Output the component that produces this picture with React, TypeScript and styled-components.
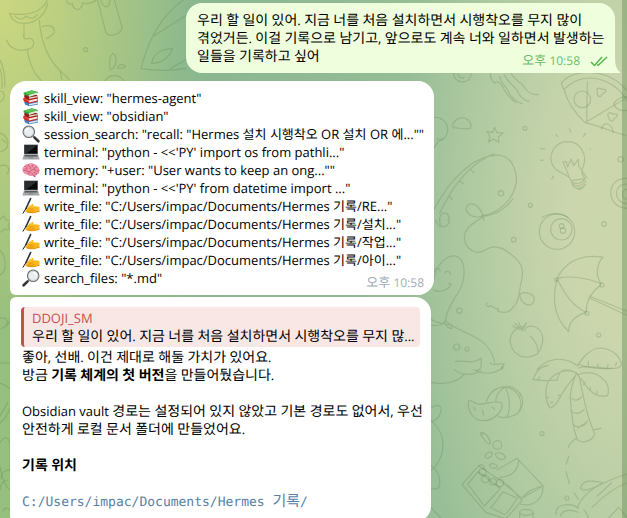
import React from 'react';
import styled, { createGlobalStyle } from 'styled-components';

const GlobalStyle = createGlobalStyle`
  * { box-sizing: border-box; }
  html, body, #root { height: 100%; }
  body {
    margin: 0;
    overflow: hidden;
    font-family: 'Open Sans', 'Noto Sans CJK KR', sans-serif;
    font-size: 13px;
    line-height: 18px;
    color: #000;
    word-break: keep-all;
    text-rendering: geometricPrecision;
  }
`;

const Page = styled.main`
  position: relative;
  display: flex;
  height: 100vh;
  overflow: hidden;
  background:
    radial-gradient(ellipse 190px 330px at 0 0, #ccd780, rgba(204, 215, 128, 0)),
    radial-gradient(ellipse 230px 480px at 100% 42%, #cbd6ad 25%, rgba(203, 214, 173, 0)),
    linear-gradient(90deg, #97bf7e, #8ab791 35%, #95bd96 65%, #a9c79d);
`;

const Wallpaper = styled.svg`
  position: absolute;
  top: 0;
  left: 0;
  width: 627px;
  height: 518px;
  fill: none;
  stroke: #5c7f4c;
  stroke-opacity: 0.27;
  stroke-linecap: round;
  stroke-linejoin: round;
`;

const Chat = styled.section`
  position: relative;
  flex: 1;
  min-width: 0;
  display: flex;
  flex-direction: column;
  padding: 3px 7px 0 10px;
  overflow: hidden;
`;

const ScrollGutter = styled.div`
  position: relative;
  flex: none;
  width: 5px;
  background: rgba(62, 112, 54, 0.3);
`;

const Bubble = styled.article<{ $width: number; $radius: string; $own?: boolean; $gap: number }>`
  position: relative;
  flex: none;
  width: 100%;
  max-width: ${(p) => p.$width}px;
  align-self: ${(p) => (p.$own ? 'flex-end' : 'flex-start')};
  margin-bottom: ${(p) => p.$gap}px;
  border-radius: ${(p) => p.$radius};
  background: ${(p) => (p.$own ? '#efffde' : '#fff')};
`;

const Paragraph = styled.p`
  margin: 0;
  min-height: 18px;
`;

const OwnBody = styled.div`
  padding: 8px 7px 8px 11px;
`;

const Tail = styled.svg`
  position: absolute;
  right: -6px;
  bottom: 0;
  width: 16px;
  height: 16px;
`;

const Hangul = styled.span`
  font-size: 14px;
  line-height: 1;
`;

const Meta = styled.span<{ $own?: boolean }>`
  display: flex;
  align-items: center;
  gap: 10px;
  float: right;
  margin: 5px 0 -5px auto;
  font-size: 12px;
  color: ${(p) => (p.$own ? '#6dbb65' : '#a0acb6')};

  ${Hangul} {
    font-size: 13px;
  }
`;

const Checks = styled.svg`
  width: 18px;
  height: 12px;
  fill: none;
  stroke: #56b84c;
  stroke-width: 1.5;
`;

const ToolList = styled.ul`
  margin: 0;
  padding: 8px 10px 8px 12px;
  list-style: none;

  ${Hangul} {
    font-size: 13px;
  }
`;

const ToolRow = styled.li`
  display: flex;
  gap: 4px;
  height: 18px;
  white-space: nowrap;
`;

const Emoji = styled.svg`
  flex: none;
  width: 18px;
  height: 18px;
`;

const ReplyBody = styled.div`
  padding: 10px 11px;
`;

const Quote = styled.blockquote`
  margin: 0 0 1px;
  padding: 2px 2px 2px 8px;
  border-left: 3px solid #c8504b;
  border-radius: 4px;
  background: #f9e7e6;
`;

const QuoteName = styled.div`
  font-weight: 500;
  color: #c5514c;
`;

const QuoteText = styled.div`
  overflow: hidden;
  text-overflow: ellipsis;
  white-space: nowrap;
`;

const TextBlock = styled.div`
  margin: 0 -8px 0 1px;
`;

const Path = styled.code`
  font-family: 'DejaVu Sans Mono', 'Noto Sans CJK KR', monospace;
  font-size: 13px;
  color: #5a7fa6;

  ${Hangul} {
    font-size: 15px;
  }
`;

function T({ children }: { children: string }) {
  return (
    <>
      {children.split(/([\uac00-\ud7a3]+)/).map((part, i) =>
        i % 2 ? <Hangul key={i}>{part}</Hangul> : part,
      )}
    </>
  );
}

type IconName = 'books' | 'left' | 'laptop' | 'brain' | 'write' | 'right';

function Lens() {
  return (
    <>
      <path d="M11 11l2 2" stroke="#8b8b8b" strokeWidth="2" />
      <path d="M12.6 12.6l3.8 3.7" stroke="#343434" strokeWidth="2.6" strokeLinecap="round" />
      <circle cx="6.8" cy="6.8" r="5.7" fill="#e9eff0" stroke="#6b6e70" strokeWidth="1.2" />
      <circle cx="6.8" cy="6.8" r="4.7" fill="none" stroke="#c5cccd" strokeWidth=".8" />
      <path d="M3.5 6.5c.2-1.8 1.3-3 3-3.2" fill="none" stroke="#fff" strokeWidth="1.2" />
    </>
  );
}

const drawings: Record<IconName, React.ReactNode> = {
  books: (
    <>
      <path d="M2 12.5l9-2 5 2v3L7 17.2l-4-1.6z" fill="#3d7fc4" />
      <path d="M7 15l8.8-1.7v1.5L7 16.5z" fill="#e8e8e2" />
      <path d="M1.5 9l9-2.2 5.5 2v3.4L7 14.5 2.5 12.6C1 11.8 1 10 1.500 9z" fill="#d3261f" />
      <path d="M6.800 11.400l8.700-1.900v1.900l-8.600 2z" fill="#f3ebe4" />
      <path d="M2.500 10l4.600 1.800" stroke="#f36a55" strokeWidth=".8" />
      <path d="M2.500 6l8.500-1.500 4.500 2v2.700L7.300 10.800 3 8.900c-1-.8-1-2-.5-2.900z" fill="#8b221c" />
      <path d="M7 8.500l8.300-1.600v1.400l-8 1.600z" fill="#e9dcc8" />
      <path d="M1.500 3.800L9.700 1.200l6.300 1.900v1L6.700 7.200 1.800 5.600z" fill="#2c9e3f" />
      <path d="M1.800 3.800l7.900-2.300 5.500 1.600-8.600 2.500z" fill="#5cc552" />
      <path d="M6.800 6l8.700-2.700v2L7 7.900z" fill="#dde8d5" />
    </>
  ),
  left: <Lens />,
  right: (
    <g transform="matrix(-1 0 0 1 18 0)">
      <Lens />
    </g>
  ),
  laptop: (
    <>
      <path d="M2 1.500h14v10H2z" fill="#777b7e" />
      <path d="M2.700 2.200h12.600v8.500H2.700z" fill="#08090a" />
      <path d="M2.700 2.200h12.600L4 10.700H2.700z" fill="#292d30" />
      <path d="M2 11.500h14l1.500 4.500H.5z" fill="#a2a6a9" />
      <path d="M3 12h12l.6 1.500H2.400z" fill="#55595b" />
      <path d="M6.800 14.300h4.400l.3 1.300h-5z" fill="#85898c" />
      <path d="M.5 16h17v.8H.5z" fill="#c3c6c8" />
    </>
  ),
  brain: (
    <>
      <path d="M1 10.500C-.2 8.500.5 6 2.400 5.200 3 3.300 5 2.500 6.600 3.100 8.200 1.500 10.700 2 11.600 3.300c2-.4 3.500.8 3.800 2.400 1.800.8 2.500 2.800 1.800 4.500.5 1.900-.6 3.400-2.500 3.400-1 1.500-3 2-4.700.9-1.800.9-3.500.2-4.100-1.100-2 .5-3.800-.4-4.900-2.900z" fill="#ee8fa6" />
      <path d="M2.400 5.500c1.500-.2 2.300.5 2.500 1.500M6.600 3.300c-.8 1-.3 2 .7 2.200s1.600 1 1.200 2M11.500 3.500c-1.400.2-1.900 1.200-1.200 2.200M15.200 5.900c-1.500-.3-2.600.4-2.700 1.600M1.200 9.800c1.600-.8 2.800-.6 3.900.4 1.500 1.100 3 .6 3.900-.7 1.100-1.500 3.200-1.500 4.200-.4 1.100 1.100 2.500 1.100 3.800.6M6 13.200c.2-1.300 1.300-1.700 2.400-1.400M14.500 13.400c0-1.300-1-2-2.200-1.900M10 14.200c.5-.4.6-1 .3-1.500M3.200 8c.5-.7 1.400-.8 2-.2" fill="none" stroke="#bd536f" strokeWidth=".8" strokeLinecap="round" />
      <path d="M7.500 3.500c1-.6 2-.7 2.800 0M2.200 7c.2-.5.6-.8 1.100-.8" fill="none" stroke="#ffc0ce" strokeWidth=".7" />
      <path d="M10.500 14.300l1.800 2 1.500-.4-.8-2.200z" fill="#c76a82" />
    </>
  ),
  write: (
    <>
      <path d="M3 14.200l3-3.900C6.800 8.900 8.300 8 9.800 7.200c1-.5 2 .2 1.600 1.200L10.500 9.500c2.300-.6 4.900-.1 7 .6v4.500c-2.200 0-3.700 1.300-6 1.400-3.200.2-6.500-.3-8.500-1.800z" fill="#fbb91d" />
      <path d="M5.500 13.800c2.500.7 4.900.6 7-.4M6.500 11.900c2 .6 3.600.3 4.800-.5M17.500 14.300c-2.200 0-3.700 1.300-6 1.400-3 .1-5-.2-7-.8" fill="none" stroke="#d98608" strokeWidth=".8" />
      <path d="M7.800 9.700c.6-.6 1.400-1.100 2.300-1.500" stroke="#ffdb55" strokeWidth=".9" />
      <path d="M8.600 1.600L4 11.500" stroke="#263238" strokeWidth="1.600" strokeLinecap="round" />
      <path d="M4 11.500L1 16.200" stroke="#15191b" strokeWidth="1" strokeLinecap="round" />
    </>
  ),
};

const tools: { icon: IconName; text: string }[] = [
  { icon: 'books', text: 'skill_view: "hermes-agent"' },
  { icon: 'books', text: 'skill_view: "obsidian"' },
  { icon: 'left', text: 'session_search: "recall: "Hermes 설치 시행착오 OR 설치 OR 에...""' },
  { icon: 'laptop', text: 'terminal: "python - <<\'PY\' import os from pathli..."' },
  { icon: 'brain', text: 'memory: "+user: "User wants to keep an ong...""' },
  { icon: 'laptop', text: 'terminal: "python - <<\'PY\' from datetime import ..."' },
  { icon: 'write', text: 'write_file: "C:/Users/impac/Documents/Hermes 기록/RE..."' },
  { icon: 'write', text: 'write_file: "C:/Users/impac/Documents/Hermes 기록/설치..."' },
  { icon: 'write', text: 'write_file: "C:/Users/impac/Documents/Hermes 기록/작업..."' },
  { icon: 'write', text: 'write_file: "C:/Users/impac/Documents/Hermes 기록/아이..."' },
  { icon: 'right', text: 'search_files: "*.md"' },
];

function Doodles() {
  return (
    <Wallpaper viewBox="0 0 627 518" aria-hidden="true">
      {/* ice lolly, leaf and drops in the top left */}
      <g transform="scale(.33333)" strokeWidth="3.5">
        <path d="M28 40c20 5 70 5 90-12 14-10 22-20 24-30M45 48c10 12 25 12 33 0 12 10 26 8 34-4M30 42c5 20 25 30 45 28 35-2 60-25 68-60" />
        <path d="M20 120c10 30 40 35 62 28 25-2 25-35 3-33-10 6-16-2-15-10M72 75v38M118 62c5 60 20 110 62 150l30 28M82 150c5 40 20 70 42 92M180 212l6 28M127 80c20-8 35 0 36 12 0 12-10 16-24 24M0 180c12 25 16 50 14 80M0 205c6 20 8 40 6 60" />
        <path d="M200 0c2 14 10 14 17 10 2 18 18 24 26 12 8-6 0-12 6-14 15 6 30 0 40-8M293 0l24 95c10 18 40 12 50-10L343 0M303 0c5 25 25 30 27 0" />
        <circle cx="257" cy="149" r="6" />
        <path d="M338 160c-16 15-8 40-7 50 20-8 22-42 7-50zM352 204c6-14 20-12 25-4-8 6-16 6-25 4zM315 242c12-20 42-20 56 0" />
        <path d="M550 0c-70 50-105 120-127 206 50 8 95 6 135-1M462 107L560 45M510 206l50-28M455 190c5-28 28-44 63-44-10 28-35 44-63 44z" />
      </g>
      {/* drawings along the left edge */}
      <g strokeWidth="1.200">
        <path d="M0 91c5 0 6 8 0 11M0 133c9 3 12 16 0 19M2 139l4 4M0 166c8-3 11 3 7 8M0 219l4-3 2 4 5 1-3 4 2 5-5-1-4 3M0 250c6 7 8 20 0 25" />
        <path d="M0 318c8-1 9 5 5 9M1 329c5-2 9-5 9-11M0 363h10M0 383c4 2 7 2 10 6M0 416l8-14M0 423c5-4 8-9 10-15M1 479c0-6 3-9 9-9M0 490c2-6 0-8 8-10M3 511c3-6 8-1 7 1" />
        <path d="M0 443c4-7 8-7 10 0v28M0 466c2 13 5 20 10 24" />
      </g>
      {/* jellyfish, pizza, bulb, bat and star */}
      <g transform="translate(427 70) scale(.33333)" strokeWidth="3.500">
        <path d="M80 5c-3 15 10 30 22 30 20 4 32-12 30-25M93 10c0 12 10 17 18 13M190 8c-1 16 5 23 13 32 10-12 20 2 28 18 12 20 20 32 36 40M218 20c4 24 18 24 27 47 8 15 18 28 40 34M232 15c8 20 30 30 42 53 9 17 20 24 32 26M252 10c10 20 30 26 42 44 12 18 24 22 42 19M195 -12c20-10 34-8 40 8l15 12" />
        <path d="M403 40c3 4 2 12 8 18 35-35 90-50 150-10 20 14 30 28 39 45M403 40c20-30 80-42 130-25 30 10 50 25 67 48M411 58c10 40 32 70 63 100 42 8 80 28 120 38M481 35l-2 125M474 158L600 83" />
        <circle cx="466" cy="88" r="25" />
        <path d="M510 58c6-10 12 2 20 0 14 0 3 10-4 14-4 10-14 12-15-2zM542 135c5-16 14 1 23-3 12-3 5 12-4 14-3 14-15 6-15-2zM524 177c5-22 30-22 35 12M600 80c-24 0-38 15-40 24 10 16 26 20 40 17" />
        <path d="M22 142c32-2 48 30 36 54-8 15-18 18-28 10M45 205l-12 10-11 18M78 174c-4-20 18-34 35-30 15 5 22 20 18 30-20 8-40-4-53 0z" />
        <path d="M203 172l6 15 19 2-14 12 2 16-17-10-15 9 5-17-9-14 17 2z" />
        <circle cx="294" cy="175" r="6" />
        <path d="M20 420C70 325 140 255 215 255c45 5 60 60 50 95-10 40-50 80-102 88M38 430C75 350 130 280 200 251M68 380l8 10M98 333l12 8M130 298l10 10M38 450c0-24 20-26 27-12 4 8 0 10-3 12" />
        <circle cx="222" cy="370" r="8" />
        <path d="M170 450c0-15-15-52-42-48-24 10-5 40 25 39 45-2 80-20 105-55" />
        <circle cx="310" cy="406" r="6" />
        <path d="M432 332c-6-20-35-20-51-40-24-35 3-76 40-77 45 0 60 46 47 76-8 15-2 25 6 35zM432 332c10 15 35 8 42-6M433 335c5 17 30 17 44-2M436 344c8 14 26 14 40-1M446 353c8 8 16 7 23-2M427 322l-19-46 10-2 4 17 10-24 8 20 14-19 1 20 25 36M427 176l4 10M386 193l6 6M475 190l-6 10M340 236l14 1M341 271l8-1M380 319l-6 8M490 236v2" />
        <circle cx="581" cy="268" r="8" />
        <path d="M600 325c-65-2-65 88 0 90M600 342c-42-2-42 56 0 60M600 358c-18-2-18 28 0 30M346 442c25-15 55-15 76 0" />
      </g>
      {/* snake, eight ball, umbrella, peach */}
      <g transform="translate(427 220) scale(.33333)" strokeWidth="3.500">
        <path d="M165-8c-20 15-55 30-53 63 4 32 35 55 67 33 34-22 70 10 90 30 25 25 18 50 11 80-5 35-8 52-22 64-12 18-32 18-46 10M280 222c18-10 42 2 42 15 0 30-44 20-44-15M215 270l-25-13M190 257c-10 10-16-8-8-8M213 272v-8" />
        <circle cx="260" cy="59" r="7" />
        <circle cx="390" cy="35" r="53" />
        <circle cx="403" cy="28" r="32" />
        <circle cx="404" cy="18" r="7" />
        <circle cx="408" cy="32" r="8" />
        <circle cx="531" cy="12" r="7" />
        <circle cx="97" cy="272" r="8" />
        <circle cx="89" cy="381" r="9" />
        <circle cx="120" cy="387" r="6" />
        <circle cx="515" cy="345" r="6" />
        <path d="M26 0c3 16 12 20 24 20 12-2 17-10 17-20M38 0l2 20M20 180c10-70 80-100 90-40 10 80-45 90-55 162 50 45 130 40 148 125M22 155c2-14 14-14 18-2M55 160c-1-10 14-8 16 4M22 211c20 7 42 0 50-18 0-5-4 0-6-4M10 295c25 25 70 10 65 30-15 3-15-12-20-14M10 315c28 5 38-1 45-12M85 425c25-8 45 12 78-10-2 15 5 35-14 36M190 430c14 8 20 0 42 2-4 8-8 6-6 16" />
        <circle cx="388" cy="179" r="5" />
        <circle cx="525" cy="195" r="6" />
        <circle cx="480" cy="280" r="6" />
        <path d="M390 175c30-60 80-72 138-64-22 25-22 60-5 80-50-20-90-25-133-16-14 60-12 115 35 160 0-30 20-48 52-58-42-20-60-50-87-100M478 277c-2-35 15-60 43-82M487 228l113 46M486 233l114 53" />
        <path d="M293 319c-30-2-50 30-42 55 12 40 50 45 80 28 30-42 15-82-20-84-12 0-16 5-18 14M310 348c18 18 25 35 22 53M258 318l18 10 6-1M264 310l20 18 14-20-12 25M276 308l7 20" />
        <path d="M330 450c25-35 80-45 122-12 15-28 40-54 70-54 42 5 58 30 62 50-5 14-30 12-50 12-35 0-58-4-82-14M484 424v12M512 432l2 8M543 434l-2 9M570 428l-5 8" />
      </g>
      {/* orange, coins, wallet, palm */}
      <g transform="translate(427 368) scale(.33333)" strokeWidth="3.500">
        <path d="M10 43c50 10 85-4 103-25M82 5c22 20 60 16 80 3M140 5c40 22 75 5 88-8" />
        <path d="M124 100c8-10 15 8 28 8 20 2 45-10 70-5 12 20-18 55-52 55-35 0-48-32-46-58zM140 118l6 9M166 127l4 14M196 117l7 8M178 101c7-36 60-60 90-36 32 22 25 80-32 83-10 2-20-1-24-5M206 101c0-22 12-34 28-44 12 20 20 65 5 90M238 58c-38-2-50 15-60 43M240 58c45 10 50 58 30 80" />
        <path d="M12 120c22-15 38-7 27 18-8 22-20 20-26 22M12 158c46 38 50 105 0 150M12 295c20 8 30 38 25 60-4 10-12 10-25 5M12 418l30 32" />
        <path d="M163 202c-10-15 14-12 25 15 10 20-12 10-25-15zM165 200c4-14 30 14 23 28M174 264c3-12 18-14 23-8-4 14-20 20-23 8zM205 258c10-8 25-2 31 10-8 14-28 4-31-10zM187 292c4-8 20-6 25 4-8 8-22 6-25-4z" />
        <circle cx="211" cy="231" r="13" />
        <circle cx="345" cy="197" r="6" />
        <path d="M105 350l50-57 95 65 35 40-48 54-60-18zM122 348l32-37 66 50-48 53zM190 418c15-10 22-30 38-46l43 18c-12 20-26 40-38 50zM210 306l60-35 78 82-63 38-75-62M220 328c35-3 55-20 55-54M285 392c5-12 25-30 63-38 2 40-32 65-68 54" />
        <circle cx="167" cy="312" r="10" />
        <circle cx="175" cy="333" r="11" />
        <circle cx="198" cy="341" r="10" />
        <circle cx="219" cy="345" r="11" />
        <ellipse cx="298" cy="433" rx="20" ry="9" />
        <path d="M278 435v15M318 435v15M156 294c5-8 15-4 16 8" />
        <path d="M448 15c-10 25-23 60-17 90 5 40 5 75 20 110 14 14 48 4 52-18-28-60-35-120-46-170zM434 90c8 10 22 8 30-4M430 128c14 14 32 8 42-4M437 168c14 15 38 8 44-10M452 180l28-18M424 238c5-14 12-20 22-26M502 185l20-4" />
        <path d="M448 15c-35-18-88 5-91 50-2 30 4 45 12 55 30-10 20-35 72-92M452 20c32-12 62-6 85 22 9 14 8 30 5 40-25 8-50 0-80-50M448 15c-30-16-50-15-58 22-20-2-30 5-72-3 8-20 18-38 45-42M455 0c35-12 65 5 100 0M364 90l-5-3M377 102l-7 2M394 80l7 4M470 50l5-7M490 67v-9M510 79v-10M334 34l4-8" />
        <path d="M426 264l-8 24M417 310l10 37M442 375l12 19" />
        <circle cx="420" cy="390" r="6" />
        <path d="M600 318c-75 25-130 50-150 102M600 345c-35 12-72 40-105 73M460 360c10-30 45-20 68-16-20 10-35 24-61 22zM511 384l42-39M388 440c-8-35 45-35 67-21M400 445c5-20 30-22 55-12M545 450l30-32 25 30M470 425c10 10 14 16 13 25" />
      </g>
    </Wallpaper>
  );
}

export default function App() {
  return (
    <>
      <GlobalStyle />
      <Page>
        <Doodles />
        <Chat>
          <Bubble $own $width={429} $gap={8} $radius="16px 16px 0 16px">
            <OwnBody>
              <Paragraph>
                <T>우리 할 일이 있어. 지금 너를 처음 설치하면서 시행착오를 무지 많이 겪었거든. 이걸 기록으로 남기고, 앞으로도 계속 너와 일하면서 발생하는 일들을 기록하고 싶어</T>
                <Meta $own>
                  <time dateTime="22:58"><T>오후 10:58</T></time>
                  <Checks viewBox="0 0 18 12" role="img" aria-label="Read">
                    <path d="M1 7l3.500 3.500L12 2M8 10.500L17 2M7 9.500l1 1" />
                  </Checks>
                </Meta>
              </Paragraph>
            </OwnBody>
            <Tail viewBox="0 0 16 16" aria-hidden="true">
              <path d="M4 0h6c0 7 1 12 5 15 1 1 0 1-1 1H4z" fill="#efffde" />
            </Tail>
          </Bubble>

          <Bubble $width={424} $gap={2} $radius="16px 16px 16px 6px">
            <ToolList>
              {tools.map((tool, i) => (
                <ToolRow key={i}>
                  <Emoji viewBox="0 0 18 18" aria-hidden="true">{drawings[tool.icon]}</Emoji>
                  <span><T>{tool.text}</T></span>
                  {i === tools.length - 1 && (
                    <Meta><time dateTime="22:58"><T>오후 10:58</T></time></Meta>
                  )}
                </ToolRow>
              ))}
            </ToolList>
          </Bubble>

          <Bubble $width={421} $gap={0} $radius="6px 16px 16px 6px">
            <ReplyBody>
              <Quote>
                <QuoteName>DDOJI_SM</QuoteName>
                <QuoteText><T>우리 할 일이 있어. 지금 너를 처음 설치하면서 시행착오를 무지 많...</T></QuoteText>
              </Quote>
              <TextBlock>
                <Paragraph><T>좋아, 선배. 이건 제대로 해둘 가치가 있어요.</T></Paragraph>
                <Paragraph>
                  <T>방금 </T><b><T>기록 체계의 첫 버전</T></b><T>을 만들어뒀습니다.</T>
                </Paragraph>
                <Paragraph />
                <Paragraph><T>Obsidian vault 경로는 설정되어 있지 않았고 기본 경로도 없어서, 우선 안전하게 로컬 문서 폴더에 만들었어요.</T></Paragraph>
                <Paragraph />
                <Paragraph><b><T>기록 위치</T></b></Paragraph>
                <Paragraph />
                <Paragraph><Path><T>C:/Users/impac/Documents/Hermes 기록/</T></Path></Paragraph>
              </TextBlock>
            </ReplyBody>
          </Bubble>
        </Chat>
        <ScrollGutter />
      </Page>
    </>
  );
}
